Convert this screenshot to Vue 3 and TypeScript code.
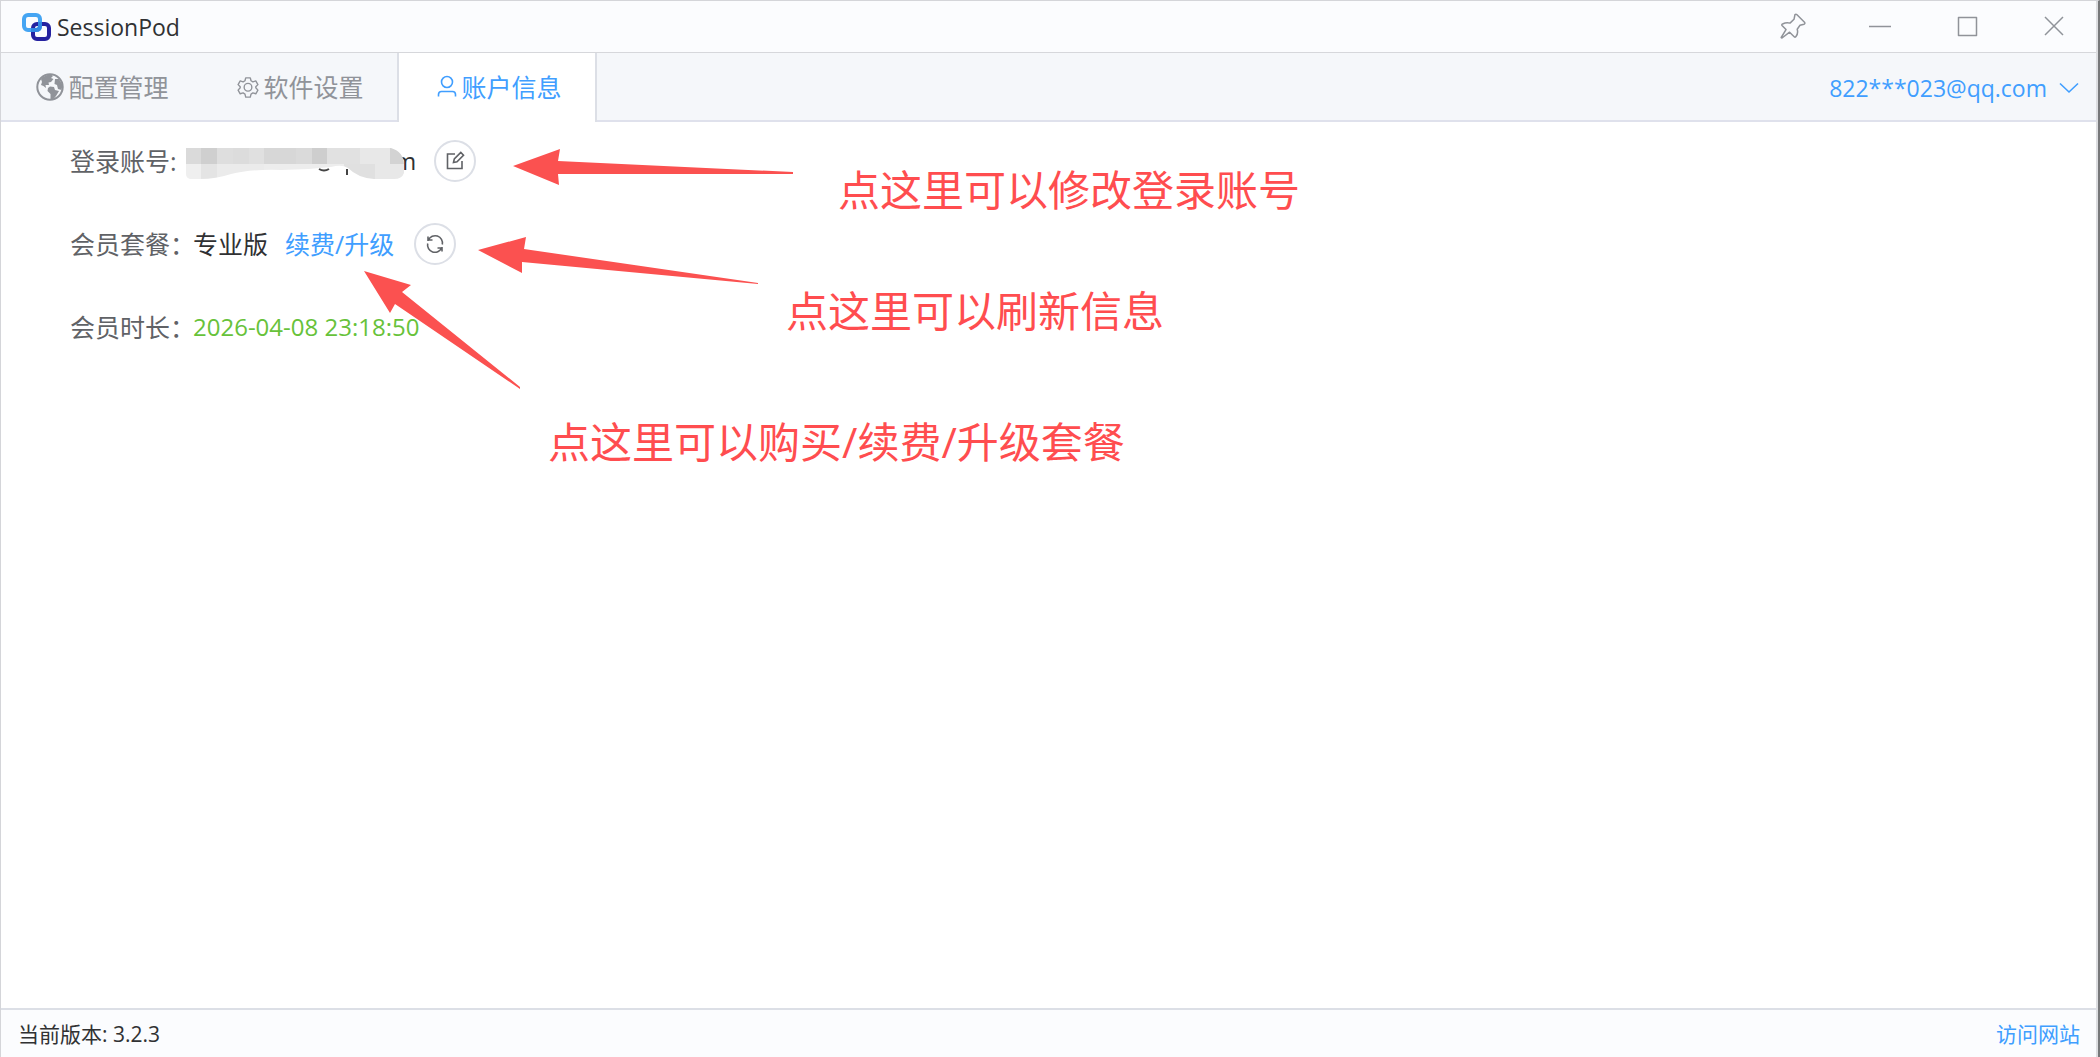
<script setup lang="ts">
import { ref } from 'vue'

interface Callout {
  text: string
  left: number
  top: number
}

interface Block {
  x: number
  w: number
  fill: string
}

const activeTab = ref('account')
const email = '822***023@qq.com'
const plan = '专业版'
const expiresAt = '2026-04-08 23:18:50'
const version = '3.2.3'

const callouts: Callout[] = [
  { text: '点这里可以修改登录账号', left: 837, top: 40 },
  { text: '点这里可以刷新信息', left: 785, top: 161 },
  { text: '点这里可以购买/续费/升级套餐', left: 547, top: 292 },
]

const arrows: string[] = [
  '512,44 559,27 557,39 792,50 792,52 557,52 558,63',
  '477,128 525,115 523,127 757,161 757,162 521,140 521,151',
  '363,149 410,163 401,170 519,265 519,267 394,182 389,191',
]

const topBlocks: Block[] = [
  { x: 0, w: 15, fill: '#dadada' },
  { x: 15, w: 16, fill: '#cfcfcf' },
  { x: 31, w: 16, fill: '#dedede' },
  { x: 47, w: 16, fill: '#dcdcdc' },
  { x: 63, w: 15, fill: '#e0e0e0' },
  { x: 78, w: 32, fill: '#d7d7d7' },
  { x: 110, w: 16, fill: '#dadada' },
  { x: 126, w: 15, fill: '#cecece' },
  { x: 141, w: 33, fill: '#e1e1e1' },
  { x: 174, w: 30, fill: '#e8e8e8' },
  { x: 204, w: 14, fill: '#d3d3d3' },
]
const bottomBlocks: Block[] = [
  { x: 0, w: 15, fill: '#efefef' },
  { x: 15, w: 16, fill: '#e4e4e4' },
  { x: 31, w: 47, fill: '#ebebeb' },
  { x: 78, w: 63, fill: '#ededed' },
  { x: 141, w: 17, fill: '#ededed' },
  { x: 158, w: 31, fill: '#e0e0e0' },
  { x: 189, w: 29, fill: '#e8e8e8' },
]
</script>

<template>
  <div class="window">
    <header class="titlebar">
      <div class="brand">
        <svg class="logo" viewBox="0 0 30 30" fill="none" aria-hidden="true">
          <rect x="3" y="3" width="16" height="15" rx="4" stroke="#45a5f3" stroke-width="4" />
          <rect x="12" y="12" width="16" height="15" rx="4" stroke="#2522a0" stroke-width="4" />
          <path d="M10 18h5q4 0 4-4v-4" stroke="#3189e4" stroke-width="4" />
        </svg>
        <span>SessionPod</span>
      </div>
      <div class="controls">
        <button type="button" aria-label="置顶">
          <svg viewBox="0 0 26 26"><path d="M15 1.500Q16 .8 17 1.800L24.500 9.200Q25.500 10.500 24 11.200L20 12.300L17.200 16.200Q18.500 20.500 15.800 23.800Q15 24.500 14.200 23.700L9.600 19.200L2 25L1.200 24.500L6 16.600L2 12.500Q1.400 11.500 2.500 11Q6.500 9 10 10.100L14 6.300Z" /></svg>
        </button>
        <button type="button" aria-label="最小化">
          <svg viewBox="0 0 26 26"><path d="M2 13.500h22" /></svg>
        </button>
        <button type="button" aria-label="最大化">
          <svg viewBox="0 0 26 26"><path d="M4.500 4.500h18v18h-18z" /></svg>
        </button>
        <button type="button" aria-label="关闭">
          <svg viewBox="0 0 26 26"><path d="M4 4l18 18M22 4L4 22" /></svg>
        </button>
      </div>
    </header>

    <nav class="tabs">
      <button type="button" class="tab" :class="{ active: activeTab === 'config' }" @click="activeTab = 'config'">
        <svg class="globe" viewBox="0 0 28 28" aria-hidden="true">
          <circle cx="14" cy="14" r="12.700" fill="none" stroke="currentColor" stroke-width="2" />
          <path fill="currentColor" d="M5 6Q9 1.500 15 1.500L17 3L15 5L17.500 6L15 9L12.500 9.500L13 12L9.500 12L10 15L7.500 13L5 12L6 9ZM12 15L14 13.500L18 14L19 17L23 18L20 23L17 26.500L14.500 26L14.500 21L11.500 18ZM19 6L23 6L26.500 12L25.500 17L22 16L21 12L18.500 11Z" />
        </svg>
        <span>配置管理</span>
      </button>
      <button type="button" class="tab" :class="{ active: activeTab === 'settings' }" @click="activeTab = 'settings'">
        <svg class="gear" viewBox="0 0 24 24" fill="none" stroke="currentColor" stroke-width="1.500" stroke-linejoin="round" aria-hidden="true">
          <path d="M9.500 2h5l.8 3.200 2 1.200 3.200-1 2.300 4-2.300 2.400v1l2.300 2.600-2.300 4-3.200-.9-2 1.200-.8 3.300h-5l-.8-3.300-2-1.200-3.200.9-2.300-4 2.300-2.600v-1L1.200 9.400l2.300-4 3.200 1 2-1.200z" />
          <circle cx="12" cy="12.300" r="4.200" />
        </svg>
        <span>软件设置</span>
      </button>
      <button type="button" class="tab" :class="{ active: activeTab === 'account' }" @click="activeTab = 'account'">
        <svg class="user" viewBox="0 0 20 24" fill="none" stroke="currentColor" stroke-width="1.600" aria-hidden="true">
          <circle cx="10" cy="7" r="5.500" />
          <path d="M1.500 21.500v-2q0-3 3-3h11q3 0 3 3v2" />
        </svg>
        <span>账户信息</span>
      </button>
      <button type="button" class="account-menu">
        <span>{{ email }}</span>
        <svg viewBox="0 0 20 12" fill="none" stroke="currentColor" stroke-width="1.600" aria-hidden="true"><path d="M1 1.500l9 8.500 9-8.500" /></svg>
      </button>
    </nav>

    <main class="content">
      <dl class="info">
        <div class="row">
          <dt>登录账号:</dt>
          <dd class="masked">
            <svg class="mosaic" viewBox="0 0 218 32" aria-hidden="true">
              <defs>
                <clipPath id="brush">
                  <path d="M0 0H205Q218 4 218 17V25Q216 31 208 31H188Q172 30 162 20Q156 16 145 19Q120 22 95 22Q65 21 45 26Q30 31 14 31H4Q0 30 0 26Z" />
                </clipPath>
              </defs>
              <path d="M133 21Q138 24 143 21M161 21V27" fill="none" stroke="#444" stroke-width="2" />
              <g clip-path="url(#brush)">
                <rect v-for="b in topBlocks" :key="'t' + b.x" :x="b.x" y="0" :width="b.w" height="16" :fill="b.fill" />
                <rect v-for="b in bottomBlocks" :key="'b' + b.x" :x="b.x" y="16" :width="b.w" height="16" :fill="b.fill" />
              </g>
            </svg>
            <span class="tail">m</span>
          </dd>
          <dd>
            <button type="button" class="round" aria-label="修改登录账号">
              <svg viewBox="0 0 20 20"><path d="M10 3H2.500v14.500H17V10M8.500 11.500l.8-3.500 6.500-6.500 2.700 2.700-6.500 6.500z" /></svg>
            </button>
          </dd>
        </div>
        <div class="row">
          <dt>会员套餐：</dt>
          <dd class="plan">{{ plan }}</dd>
          <dd class="renew"><a href="#renew">续费/升级</a></dd>
          <dd>
            <button type="button" class="round" aria-label="刷新信息">
              <svg viewBox="0 0 20 20"><path d="M3 7V2.500M3 6h4.500M3.500 6A7.300 7.300 0 0 1 17.300 10.500M17 13v4.500M17 14h-4.500M16.500 14A7.300 7.300 0 0 1 2.700 9.500" /></svg>
            </button>
          </dd>
        </div>
        <div class="row">
          <dt>会员时长：</dt>
          <dd class="expires">{{ expiresAt }}</dd>
        </div>
      </dl>

      <svg class="arrows" aria-hidden="true">
        <polygon v-for="points in arrows" :key="points" :points="points" fill="#fb5150" />
      </svg>
      <p v-for="c in callouts" :key="c.text" class="callout" :style="{ left: c.left + 'px', top: c.top + 'px' }">{{ c.text }}</p>
    </main>

    <footer class="statusbar">
      <span>当前版本: {{ version }}</span>
      <a href="#site">访问网站</a>
    </footer>
  </div>
</template>

<style>
body {
  margin: 0;
  background: #fff;
}
</style>

<style scoped>
.window {
  box-sizing: border-box;
  min-height: 100vh;
  display: flex;
  flex-direction: column;
  padding-right: 2px;
  border: 1px solid #d4d5d9;
  border-right: 2px solid #77787a;
  border-bottom: 0;
  background: #dcdde0;
  color: #303133;
  font-family: "Open Sans", "Noto Sans CJK SC", sans-serif;
  font-size: 24px;
  line-height: 32px;
}

button {
  padding: 0;
  border: 0;
  background: none;
  color: inherit;
  font: inherit;
}

a {
  color: #409eff;
  text-decoration: none;
}

.titlebar {
  display: flex;
  align-items: center;
  justify-content: space-between;
  height: 51px;
  padding: 0 29px 0 20px;
  border-bottom: 1px solid #d6d7db;
  background: #fbfcfe;
}

.brand {
  display: flex;
  align-items: center;
  gap: 6px;
  font-size: 23px;
}

.logo {
  width: 30px;
  height: 30px;
}

.controls {
  display: flex;
  gap: 61px;
  padding-bottom: 2px;
}

.controls button,
.controls svg {
  display: block;
  width: 26px;
  height: 26px;
}

.controls svg {
  fill: none;
  stroke: #909399;
  stroke-width: 1.500;
  stroke-linejoin: round;
}

.tabs {
  display: flex;
  height: 69px;
  background: #f5f7fa;
  box-shadow: inset 0 -2px #dfe1ec;
  color: #909399;
}

.tab {
  display: flex;
  align-items: center;
  justify-content: center;
  gap: 4px;
  box-sizing: border-box;
  width: 198px;
  padding: 0 0 2px 5px;
  border: 0 solid #dcdfe6;
  font-size: 25px;
}

.tab.active {
  width: 200px;
  border-width: 0 2px;
  background: #fff;
  color: #409eff;
}

.globe {
  width: 28px;
  height: 28px;
}

.gear {
  width: 22px;
  height: 24px;
}

.user {
  width: 20px;
  height: 24px;
}

.account-menu {
  display: flex;
  align-items: center;
  gap: 12px;
  margin-left: auto;
  padding-right: 17px;
  color: #409eff;
  font-size: 23px;
}

.account-menu svg {
  width: 20px;
  height: 12px;
}

.content {
  position: relative;
  flex: 1;
  padding: 0 69px;
  background: #fff;
}

.info {
  display: flex;
  flex-direction: column;
  gap: 41px;
  margin: 0;
  padding-top: 18px;
}

.row {
  display: flex;
  align-items: center;
  height: 42px;
}

dt {
  width: 123px;
  color: #606266;
  font-size: 25px;
  white-space: nowrap;
}

dd {
  margin: 0;
}

.masked {
  display: flex;
  align-items: center;
  width: 241px;
}

.mosaic {
  position: relative;
  z-index: 1;
  flex: none;
  width: 218px;
  height: 32px;
  margin: 6px 0 0 -7px;
}

.tail {
  margin-left: -10px;
}

.plan {
  width: 92px;
  font-size: 25px;
}

.renew {
  width: 129px;
  font-size: 25px;
}

.expires {
  color: #67c23a;
}

.round {
  display: flex;
  align-items: center;
  justify-content: center;
  box-sizing: border-box;
  width: 42px;
  height: 42px;
  border: 2px solid #dcdfe6;
  border-radius: 50%;
  background: #fff;
}

.round svg {
  width: 20px;
  height: 20px;
  fill: none;
  stroke: #606266;
  stroke-width: 1.600;
}

.arrows {
  position: absolute;
  top: 0;
  left: 0;
  width: 100%;
  height: 100%;
  pointer-events: none;
}

.callout {
  position: absolute;
  margin: 0;
  color: #ff4d4f;
  font-size: 42px;
  line-height: 56px;
  white-space: nowrap;
}

.statusbar {
  display: flex;
  align-items: center;
  justify-content: space-between;
  height: 47px;
  padding: 0 16px 0 17px;
  border-top: 2px solid #dcdfe6;
  background: #fbfcfe;
  font-size: 21px;
}
</style>
